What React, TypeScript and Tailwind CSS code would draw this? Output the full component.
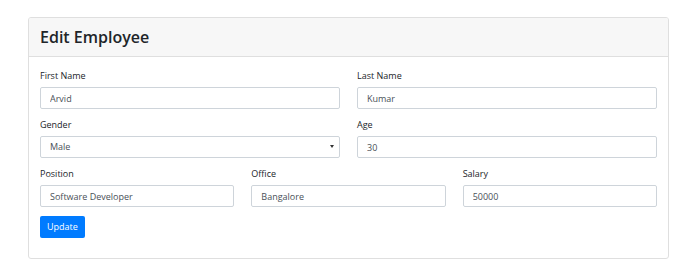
import React from "react"

const font = { fontFamily: '"Open Sans", "Noto Sans", sans-serif' }

function Field({ label, value }: { label: string; value: string }) {
  return (
    <div className="flex flex-col min-w-0">
      <label className="text-[9px] leading-[14px] text-[#212529] mb-[4px]">{label}</label>
      <input
        defaultValue={value}
        className="block h-[22px] w-full px-[9px] text-[9px] text-[#495057] bg-white border border-[#ced4da] rounded-[2px] outline-none"
      />
    </div>
  )
}

export default function App() {
  return (
    <div className="bg-white min-h-screen pt-[17px]" style={font}>
      <div className="ml-[28px] w-[641px] border border-[#dfdfdf] rounded-[3px] overflow-hidden">
        {/* Card header */}
        <div className="h-[39px] flex items-center px-[11px] bg-[#f7f7f7] border-b border-[#dfdfdf]">
          <h3 className="text-[16px] font-semibold text-[#212529] leading-none">Edit Employee</h3>
        </div>

        {/* Card body */}
        <div className="px-[11px] pt-[12px] pb-[20px]">
          <form className="flex flex-col gap-[9px]">
            <div className="grid grid-cols-2 gap-x-[17px]">
              <Field label="First Name" value="Arvid" />
              <Field label="Last Name" value="Kumar" />
            </div>

            <div className="grid grid-cols-2 gap-x-[17px]">
              <div className="flex flex-col min-w-0">
                <label className="text-[9px] leading-[14px] text-[#212529] mb-[4px]">Gender</label>
                <div className="relative h-[22px]">
                  <select
                    defaultValue="Male"
                    className="block appearance-none h-[22px] w-full px-[9px] text-[9px] text-[#495057] bg-white border border-[#ced4da] rounded-[2px] outline-none"
                  >
                    <option>Male</option>
                    <option>Female</option>
                  </select>
                  <svg
                    className="absolute right-[6px] top-[9px] pointer-events-none"
                    width="4"
                    height="3"
                    viewBox="0 0 4 3"
                  >
                    <path d="M0 0 L4 0 L2 3 Z" fill="#333" />
                  </svg>
                </div>
              </div>
              <Field label="Age" value="30" />
            </div>

            <div className="grid grid-cols-3 gap-x-[17px]">
              <Field label="Position" value="Software Developer" />
              <Field label="Office" value="Bangalore" />
              <Field label="Salary" value="50000" />
            </div>

            <div>
              <button
                type="button"
                className="block h-[22px] px-[7px] bg-[#007bff] text-white text-[9px] font-medium rounded-[2px]"
              >
                Update
              </button>
            </div>
          </form>
        </div>
      </div>
    </div>
  )
}
